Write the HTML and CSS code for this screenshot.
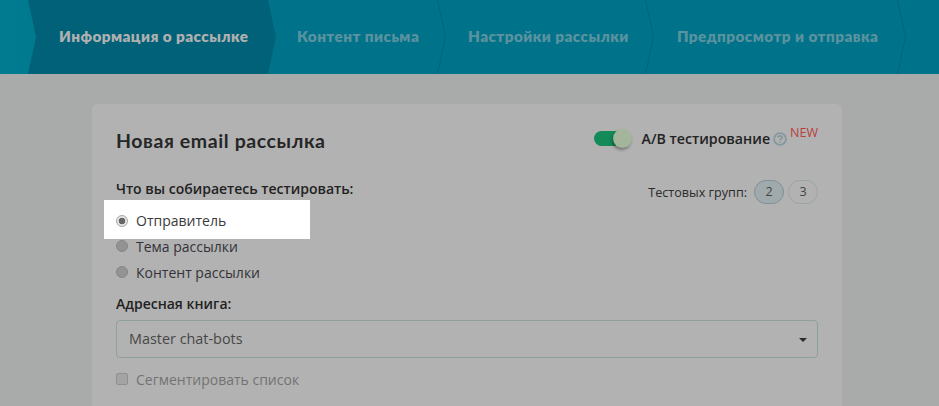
FILE: index.html
```html
<!DOCTYPE html>
<html lang="ru">
<head>
<meta charset="utf-8">
<title>Новая email рассылка</title>
<link rel="stylesheet" href="styles.css">
</head>
<body>
<nav class="steps">
  <div class="step step-active">Информация о рассылке</div>
  <div class="step step-second">Контент письма<svg class="chev" viewBox="0 0 9 74"><polyline points="0.5,0 8.5,37 0.5,74"/></svg></div>
  <div class="step">Настройки рассылки<svg class="chev" viewBox="0 0 9 74"><polyline points="0.5,0 8.5,37 0.5,74"/></svg></div>
  <div class="step step-last">Предпросмотр и отправка<svg class="chev" viewBox="0 0 9 74"><polyline points="0.5,0 8.5,37 0.5,74"/></svg></div>
</nav>
<main class="page">
  <section class="card">
    <header class="card-head">
      <h1 class="title">Новая email рассылка</h1>
      <div class="ab">
        <span class="toggle"><span class="knob"></span></span>
        <span class="ab-label">A/B тестирование</span>
        <svg class="help" viewBox="0 0 16 16"><circle cx="8" cy="8" r="6.8"/><path d="M5.6 6.4c0-1.4 1.2-2.1 2.4-2.1s2.4.7 2.4 2c0 1.6-2.4 1.6-2.4 3"/><path d="M8 10.6v1.4"/></svg>
        <sup class="new">NEW</sup>
      </div>
    </header>
    <div class="test-row">
      <div class="label">Что вы собираетесь тестировать:</div>
      <div class="groups">
        <span class="groups-label">Тестовых групп:</span>
        <span class="pill pill-on">2</span>
        <span class="pill">3</span>
      </div>
    </div>
    <div class="radio radio-hl"><span class="dot dot-on"></span>Отправитель</div>
    <div class="radio"><span class="dot"></span>Тема рассылки</div>
    <div class="radio"><span class="dot"></span>Контент рассылки</div>
    <div class="label label-book">Адресная книга:</div>
    <div class="select">Master chat-bots<span class="caret"></span></div>
    <div class="check"><span class="box"></span>Сегментировать список</div>
  </section>
</main>
</body>
</html>
```
FILE: styles.css
```css
* { box-sizing: border-box; }
html, body { margin: 0; height: 100%; }
body {
  height: 406px;
  overflow: hidden;
  background: #a9abaa;
  font-family: "Open Sans", sans-serif;
  font-size: 14px;
  color: #2b2b2b;
}
.steps {
  display: grid;
  grid-template-columns: 240px 169px 208px 252px;
  height: 74px;
  padding-left: 28px;
  background: linear-gradient(90deg, #007b90 0, #00738a 280px);
}
.step {
  position: relative;
  padding-left: 31px;
  line-height: 73px;
  font-family: "Lato", sans-serif;
  font-weight: 800;
  font-size: 15.3px;
  letter-spacing: .43px;
  white-space: nowrap;
  color: #5a929f;
}
.step-second { padding-left: 29px; }
.step-last { padding-left: 32px; }
.step-active {
  width: 248px;
  background: #006178;
  color: #b0b0b0;
  clip-path: polygon(0 0, 240px 0, 248px 50%, 240px 100%, 0 100%, 8px 50%);
}
.chev {
  position: absolute;
  top: 0;
  right: -9px;
  width: 9px;
  height: 74px;
}
.chev polyline { fill: none; stroke: #00657c; stroke-width: 1; }
.page { padding: 30px 97px 0 92px; }
.card {
  height: 320px;
  padding: 24px;
  background: #b2b2b2;
  border-radius: 6px;
}
.card-head {
  display: flex;
  justify-content: space-between;
  align-items: flex-start;
  height: 26px;
}
.title {
  margin: 0;
  font-family: "Lato", sans-serif;
  font-size: 19.5px;
  letter-spacing: .6px;
  font-weight: 700;
  line-height: 26px;
  color: #262626;
}
.ab {
  display: flex;
  align-items: center;
  height: 20px;
}
.toggle {
  position: relative;
  width: 32px;
  height: 15px;
  margin-right: 16px;
  border-radius: 8px;
  background: #138a58;
}
.knob {
  position: absolute;
  top: -2px;
  right: -6px;
  width: 19px;
  height: 19px;
  border-radius: 50%;
  background: #a3b59b;
  box-shadow: -1px 2px 3px rgba(0,0,0,.35);
}
.ab-label { font-weight: 600; font-size: 14.2px; color: #222; }
.help { width: 14px; height: 14px; margin: 1px 0 0 3px; fill: none; stroke: #84979f; stroke-width: 2; }
.new { align-self: flex-start; margin: -2px 0 0 3px; font-size: 12.5px; line-height: 14px; color: #b8403a; }
.test-row {
  display: flex;
  justify-content: space-between;
  align-items: flex-start;
  margin-top: 25px;
  height: 26px;
}
.label { font-weight: 600; font-size: 14px; line-height: 20px; color: #222; }
.groups { display: flex; align-items: center; align-self: center; gap: 4px; font-size: 12.6px; }
.groups-label { margin-right: 3px; font-weight: 400; color: #2b2b2b; }
.pill {
  width: 30px;
  height: 24px;
  border: 1px solid #96a5a5;
  border-radius: 12px;
  text-align: center;
  line-height: 22px;
  color: #444;
}
.pill-on { background: #a0aaad; border-color: #7f9096; }
.radio {
  display: flex;
  align-items: center;
  height: 26px;
  font-size: 14px;
  color: #33323a;
}
.radio-hl {
  width: 206px;
  height: 39px;
  margin: -5px 0 -6px -12px;
  padding: 2px 0 0 12px;
  background: #fff;
  color: #3a3a3a;
}
.dot {
  width: 12px;
  height: 12px;
  margin-right: 8px;
  border-radius: 50%;
  border: 1px solid #868686;
  background: #939393;
}
.dot-on {
  border: 1px solid #a8a8a8;
  background: radial-gradient(circle, #666 0 3px, #e4e4e4 3.6px);
}
.label-book { margin-top: 9px; }
.select {
  position: relative;
  height: 38px;
  margin-top: 6px;
  padding-left: 12px;
  border: 1px solid #8ea09d;
  border-radius: 4px;
  font-size: 14.4px;
  line-height: 36px;
  color: #474747;
}
.caret {
  position: absolute;
  top: 17px;
  right: 10px;
  border: 4px solid transparent;
  border-top-color: #2a2a2a;
  border-bottom: 0;
}
.check {
  display: flex;
  align-items: center;
  margin-top: 10px;
  height: 22px;
  color: #727272;
}
.box {
  width: 12px;
  height: 12px;
  margin-right: 8px;
  border: 1px solid #8f8f8f;
  border-radius: 2px;
  background: #a4a4a4;
}
```
